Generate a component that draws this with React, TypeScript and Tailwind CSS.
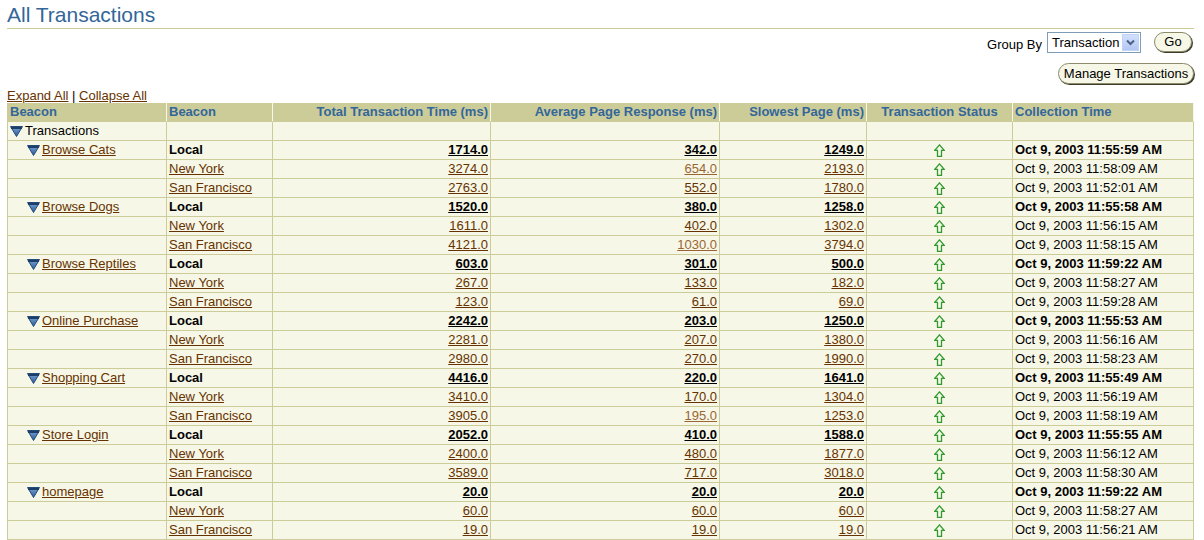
import React from 'react';

type Row = [string, string, string, string, string];

const groups: { name: string; rows: Row[] }[] = [
  {
    name: 'Browse Cats',
    rows: [
      ['Local', '1714.0', '342.0', '1249.0', '11:55:59'],
      ['New York', '3274.0', '654.0', '2193.0', '11:58:09'],
      ['San Francisco', '2763.0', '552.0', '1780.0', '11:52:01'],
    ],
  },
  {
    name: 'Browse Dogs',
    rows: [
      ['Local', '1520.0', '380.0', '1258.0', '11:55:58'],
      ['New York', '1611.0', '402.0', '1302.0', '11:56:15'],
      ['San Francisco', '4121.0', '1030.0', '3794.0', '11:58:15'],
    ],
  },
  {
    name: 'Browse Reptiles',
    rows: [
      ['Local', '603.0', '301.0', '500.0', '11:59:22'],
      ['New York', '267.0', '133.0', '182.0', '11:58:27'],
      ['San Francisco', '123.0', '61.0', '69.0', '11:59:28'],
    ],
  },
  {
    name: 'Online Purchase',
    rows: [
      ['Local', '2242.0', '203.0', '1250.0', '11:55:53'],
      ['New York', '2281.0', '207.0', '1380.0', '11:56:16'],
      ['San Francisco', '2980.0', '270.0', '1990.0', '11:58:23'],
    ],
  },
  {
    name: 'Shopping Cart',
    rows: [
      ['Local', '4416.0', '220.0', '1641.0', '11:55:49'],
      ['New York', '3410.0', '170.0', '1304.0', '11:56:19'],
      ['San Francisco', '3905.0', '195.0', '1253.0', '11:58:19'],
    ],
  },
  {
    name: 'Store Login',
    rows: [
      ['Local', '2052.0', '410.0', '1588.0', '11:55:55'],
      ['New York', '2400.0', '480.0', '1877.0', '11:56:12'],
      ['San Francisco', '3589.0', '717.0', '3018.0', '11:58:30'],
    ],
  },
  {
    name: 'homepage',
    rows: [
      ['Local', '20.0', '20.0', '20.0', '11:59:22'],
      ['New York', '60.0', '60.0', '60.0', '11:58:27'],
      ['San Francisco', '19.0', '19.0', '19.0', '11:56:21'],
    ],
  },
];

// links the browser shows as already visited
const visited = new Set(['654.0', '1030.0', '195.0']);

const Tri = () => (
  <svg width="13" height="11" viewBox="0 0 13 11" className="shrink-0">
    <defs>
      <linearGradient id="triFill" x1="0" y1="0" x2="0" y2="1">
        <stop offset="0" stopColor="#7aa6d8" />
        <stop offset="1" stopColor="#2a5a94" />
      </linearGradient>
    </defs>
    <polygon points="0.5,0.5 12.5,0.5 6.5,10.5" fill="url(#triFill)" stroke="#234a78" strokeWidth="1" />
    <rect x="1" y="1" width="11" height="2" fill="#1d3e68" />
  </svg>
);

const UpArrow = () => (
  <svg width="11" height="13" viewBox="0 0 11 13" className="inline-block align-middle">
    <path d="M5.5 0.9 L10.2 6.3 H7.5 V12.4 H3.5 V6.3 H0.8 Z" fill="none" stroke="#2f9a2f" strokeWidth="1.3" />
  </svg>
);

const th = 'bg-[#cccc99] text-[#336699] font-bold leading-[18px] px-[2px] border-r border-b border-r-[#f7f7e7] border-b-[#cccc99] whitespace-nowrap';
const td = 'bg-[#f7f7e7] border-r border-b border-[#cccc99] px-[2px] leading-[18px] whitespace-nowrap';

const Num = ({ v, local }: { v: string; local: boolean }) =>
  local ? (
    <a href="#" className="font-bold text-black underline">{v}</a>
  ) : (
    <a href="#" className={visited.has(v) ? 'text-[#996633] underline' : 'text-[#663300] underline'}>{v}</a>
  );

export default function App() {
  return (
    <div className="w-[1204px] h-[540px] overflow-hidden bg-white font-['Liberation_Sans',Arial,sans-serif] text-[13px] text-black">
      <div className="ml-[7px] w-[1187px]">
        <h1 className="pt-[3px] pb-[1px] text-[21px] leading-[24px] text-[#336699] border-b border-[#cccc99]">
          All Transactions
        </h1>

        <div className="flex justify-end items-start h-[21px] mt-[3px] pr-[2px]">
          <span className="self-end mr-[5px] leading-[17px]">Group By</span>
          <div className="flex items-center justify-between w-[94px] h-[21px] border border-[#7f9db9] bg-white pl-[4px] pr-[1px]">
            <span>Transaction</span>
            <span className="flex items-center justify-center w-[17px] h-[17px] bg-gradient-to-b from-[#d2e0fd] to-[#b3c7f4] border border-[#c3d3f7]">
              <svg width="9" height="7" viewBox="0 0 9 7">
                <path d="M1 1.5 L4.5 5 L8 1.5" fill="none" stroke="#4d6185" strokeWidth="2" />
              </svg>
            </span>
          </div>
          <button className="ml-[13px] w-[38px] h-[20px] rounded-full border border-[#8c8c6a] bg-[#f7f7e7] shadow-[1px_1px_0_#3b3b2b] leading-[18px]">
            Go
          </button>
        </div>

        <div className="flex justify-end mt-[10px]">
          <button className="h-[21px] w-[136px] rounded-full border border-[#8c8c6a] bg-[#f7f7e7] shadow-[1px_1px_0_#3b3b2b] leading-[19px]">
            Manage Transactions
          </button>
        </div>

        <div className="mt-[4px] leading-[15px]">
          <a href="#" className="text-[#663300] underline">Expand All</a> | <a href="#" className="text-[#663300] underline">Collapse All</a>
        </div>

        <table className="table-fixed border-separate border-spacing-0 w-[1187px]">
          <colgroup>
            <col className="w-[160px]" />
            <col className="w-[106px]" />
            <col className="w-[218px]" />
            <col className="w-[229px]" />
            <col className="w-[147px]" />
            <col className="w-[146px]" />
            <col className="w-[181px]" />
          </colgroup>
          <thead>
            <tr>
              <th className={`${th} text-left border-l border-l-[#cccc99]`}>Beacon</th>
              <th className={`${th} text-left`}>Beacon</th>
              <th className={`${th} text-right`}>Total Transaction Time (ms)</th>
              <th className={`${th} text-right`}>Average Page Response (ms)</th>
              <th className={`${th} text-right`}>Slowest Page (ms)</th>
              <th className={`${th} text-center`}>Transaction Status</th>
              <th className={`${th} text-left border-r-[#cccc99]`}>Collection Time</th>
            </tr>
          </thead>
          <tbody>
            <tr>
              <td className={`${td} border-l`}>
                <div className="flex items-center gap-[2px]">
                  <Tri />
                  <span>Transactions</span>
                </div>
              </td>
              <td className={td}>&nbsp;</td>
              <td className={td}></td>
              <td className={td}></td>
              <td className={td}></td>
              <td className={td}></td>
              <td className={td}></td>
            </tr>
            {groups.map((g) =>
              g.rows.map((r, i) => {
                const local = r[0] === 'Local';
                return (
                  <tr key={g.name + r[0]}>
                    <td className={`${td} border-l`}>
                      {i === 0 ? (
                        <div className="flex items-center gap-[2px] pl-[17px]">
                          <Tri />
                          <a href="#" className="text-[#663300] underline">{g.name}</a>
                        </div>
                      ) : (
                        <span>&nbsp;</span>
                      )}
                    </td>
                    <td className={td}>
                      {local ? (
                        <span className="font-bold">Local</span>
                      ) : (
                        <a href="#" className="text-[#663300] underline">{r[0]}</a>
                      )}
                    </td>
                    <td className={`${td} text-right`}><Num v={r[1]} local={local} /></td>
                    <td className={`${td} text-right`}><Num v={r[2]} local={local} /></td>
                    <td className={`${td} text-right`}><Num v={r[3]} local={local} /></td>
                    <td className={`${td} text-center`}><UpArrow /></td>
                    <td className={`${td} ${local ? 'font-bold' : ''}`}>Oct 9, 2003 {r[4]} AM</td>
                  </tr>
                );
              })
            )}
          </tbody>
        </table>
      </div>
    </div>
  );
}
